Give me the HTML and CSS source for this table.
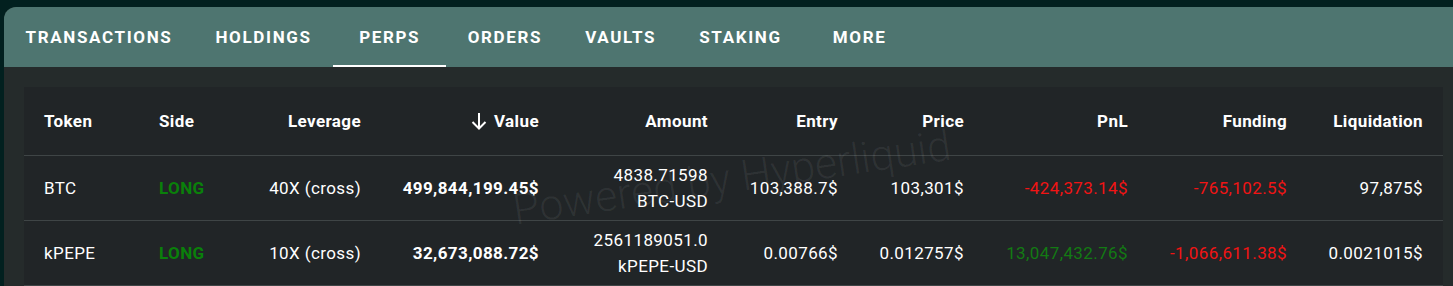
FILE: index.html
```html
<!DOCTYPE html>
<html lang="en">
<head>
<meta charset="utf-8">
<title>Perps</title>
<link rel="stylesheet" href="styles.css">
</head>
<body>
<div class="card">
  <nav class="tabs">
    <div class="tab">TRANSACTIONS</div>
    <div class="tab">HOLDINGS</div>
    <div class="tab active">PERPS</div>
    <div class="tab">ORDERS</div>
    <div class="tab">VAULTS</div>
    <div class="tab">STAKING</div>
    <div class="tab">MORE</div>
  </nav>
  <div class="panel">
    <div class="table">
      <div class="row head">
        <div class="cell left">Token</div>
        <div class="cell left">Side</div>
        <div class="cell">Leverage</div>
        <div class="cell"><span class="sort"><svg width="18" height="20" viewBox="0 0 18 20" aria-hidden="true"><path d="M9 2V17.5M2.5 11L9 17.5L15.5 11" fill="none" stroke="#fff" stroke-width="2"/></svg>Value</span></div>
        <div class="cell">Amount</div>
        <div class="cell">Entry</div>
        <div class="cell">Price</div>
        <div class="cell">PnL</div>
        <div class="cell">Funding</div>
        <div class="cell">Liquidation</div>
      </div>
      <div class="row">
        <div class="cell left">BTC</div>
        <div class="cell left long">LONG</div>
        <div class="cell">40X (cross)</div>
        <div class="cell bold">499,844,199.45$</div>
        <div class="cell stack"><span>4838.71598</span><span>BTC-USD</span></div>
        <div class="cell">103,388.7$</div>
        <div class="cell">103,301$</div>
        <div class="cell neg">-424,373.14$</div>
        <div class="cell neg">-765,102.5$</div>
        <div class="cell">97,875$</div>
      </div>
      <div class="row">
        <div class="cell left">kPEPE</div>
        <div class="cell left long">LONG</div>
        <div class="cell">10X (cross)</div>
        <div class="cell bold">32,673,088.72$</div>
        <div class="cell stack"><span>2561189051.0</span><span>kPEPE-USD</span></div>
        <div class="cell">0.00766$</div>
        <div class="cell">0.012757$</div>
        <div class="cell pos">13,047,432.76$</div>
        <div class="cell neg">-1,066,611.38$</div>
        <div class="cell">0.0021015$</div>
      </div>
      <div class="watermark">Powered by Hyperliquid</div>
    </div>
  </div>
</div>
</body>
</html>
```
FILE: styles.css
```css
* { box-sizing: border-box; }
html, body { margin: 0; padding: 0; }
body {
  background: #02201f;
  font-family: Roboto, "Liberation Sans", sans-serif;
  color: #fff;
  overflow: hidden;
}
.card {
  margin: 7px 0 0 4px;
  border-top-left-radius: 12px;
  overflow: hidden;
  background: #252b2b;
  min-height: 400px;
}
.tabs {
  display: flex;
  height: 60px;
  background: #4e7570;
}
.tab {
  position: relative;
  min-width: 113px;
  padding: 0 21.5px;
  display: flex;
  align-items: center;
  justify-content: center;
  font-size: 17px;
  font-weight: 700;
  letter-spacing: 1.65px;
  color: #fff;
}
.tab.active::after {
  content: "";
  position: absolute;
  left: 0;
  right: 0;
  bottom: 0;
  height: 2px;
  background: #fff;
}
.panel {
  padding: 20px 10px 0 20px;
}
.table {
  position: relative;
  background: #212527;
  overflow: hidden;
  height: 300px;
}
.row {
  display: grid;
  grid-template-columns: 115px 102px 140px 178px 169px 130px 126px 164px 159px 136px;
  height: 65px;
  border-bottom: 1px solid #3f4546;
  font-size: 17px;
  letter-spacing: 0.4px;
}
.row.head {
  height: 69px;
  font-weight: 700;
  letter-spacing: 0.4px;
}
.cell {
  padding: 0 20px;
  display: flex;
  align-items: center;
  justify-content: flex-end;
  text-align: right;
  white-space: nowrap;
}
.cell.left { justify-content: flex-start; text-align: left; }
.bold { font-weight: 700; }
.long { color: #0a800a; font-weight: 700; }
.neg { color: #f11414; }
.pos { color: #137a13; }
.stack {
  flex-direction: column;
  align-items: flex-end;
  justify-content: center;
  line-height: 26px;
}
.sort { display: inline-flex; align-items: center; gap: 6px; }
.sort svg { display: block; }
.watermark {
  position: absolute;
  left: 489px;
  top: 98px;
  font-size: 43px;
  font-weight: 300;
  color: rgba(255, 255, 255, 0.065);
  transform: rotate(-8.5deg);
  transform-origin: left center;
  white-space: nowrap;
  pointer-events: none;
}
```
